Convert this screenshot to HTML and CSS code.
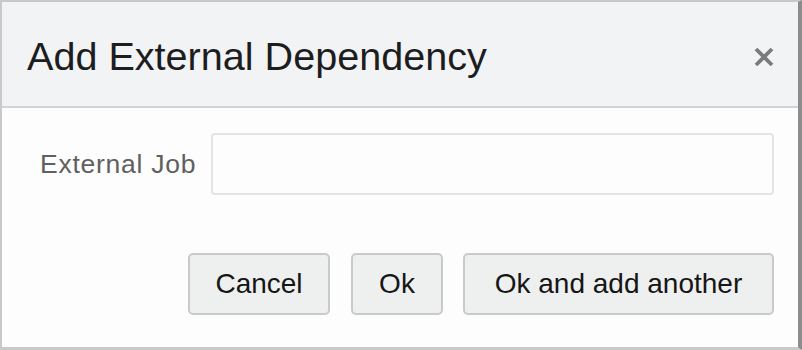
FILE: index.html
```html
<!DOCTYPE html>
<html>
<head>
<meta charset="utf-8">
<link rel="stylesheet" href="styles.css">
</head>
<body>
<div class="dialog">
  <div class="dialog-header">
    <h1 class="dialog-title">Add External Dependency</h1>
    <button class="close-btn" aria-label="Close">
      <svg width="20" height="20" viewBox="0 0 20 20"><path d="M2 2 L18 18 M18 2 L2 18" stroke="#7b7b7b" stroke-width="3.8" stroke-linecap="butt" fill="none"/></svg>
    </button>
  </div>
  <div class="dialog-body">
    <div class="form-row">
      <label class="field-label" for="job">External Job</label>
      <input class="field-input" id="job" type="text">
    </div>
    <div class="button-row">
      <button class="btn btn-cancel">Cancel</button>
      <button class="btn btn-ok">Ok</button>
      <button class="btn btn-another">Ok and add another</button>
    </div>
  </div>
</div>
</body>
</html>
```

FILE: styles.css
```css
html, body {
  margin: 0;
  padding: 0;
  background: #ffffff;
}

.dialog {
  box-sizing: border-box;
  width: 802px;
  height: 350px;
  border-top: 2px solid #c9c9c9;
  border-left: 2px solid #c9c9c9;
  border-bottom: 3px solid #c9c9c9;
  border-right: 4px solid #8c8c8c;
  font-family: "Liberation Sans", Arial, sans-serif;
  background: #fdfdfd;
  display: flex;
  flex-direction: column;
}

.dialog-header {
  height: 106px;
  box-sizing: border-box;
  background: #f2f3f5;
  border-bottom: 2px solid #d2d3d5;
  display: flex;
  align-items: center;
  justify-content: space-between;
  padding: 4px 24px 0 25px;
}

.dialog-title {
  margin: 0;
  font-size: 39.6px;
  font-weight: normal;
  color: #1d1d1f;
}

.close-btn {
  background: none;
  border: none;
  padding: 0;
  width: 20px;
  height: 20px;
  display: flex;
  margin-top: 2px;
  margin-right: 0;
}

.dialog-body {
  flex: 1;
  padding: 25px 24px 0 38px;
}

.form-row {
  display: flex;
  align-items: center;
  gap: 15px;
}

.field-label {
  font-size: 26.5px;
  color: #606060;
  letter-spacing: 0.75px;
}

.field-input {
  box-sizing: border-box;
  flex: 1;
  height: 62px;
  border: 2px solid #e4e4e4;
  border-radius: 4px;
  background: #fdfdfd;
  margin: 0;
}

.button-row {
  display: flex;
  justify-content: flex-end;
  gap: 21px;
  margin-top: 58px;
}

.btn {
  box-sizing: border-box;
  height: 62px;
  border: 2px solid #cacaca;
  border-radius: 5px;
  background: #eeefef;
  font-family: "Liberation Sans", Arial, sans-serif;
  font-size: 28px;
  color: #161616;
  padding: 0;
}

.btn-cancel { width: 142px; }
.btn-ok { width: 92px; }
.btn-another { width: 311px; margin-left: -1px; }
```
